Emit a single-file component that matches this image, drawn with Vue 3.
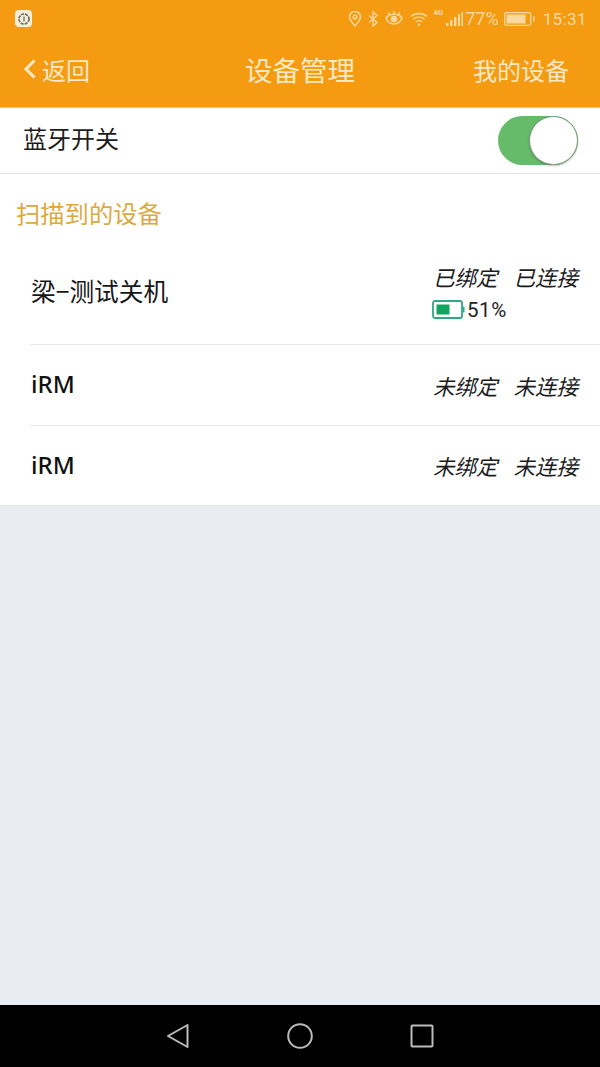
<script setup>
const devices = [
  { id: 1, name: '梁−测试关机', bind: '已绑定', link: '已连接', battery: 51 },
  { id: 2, name: 'iRM', bind: '未绑定', link: '未连接' },
  { id: 3, name: 'iRM', bind: '未绑定', link: '未连接' }
]
</script>

<template>
  <div class="page">
    <header class="top">
      <div class="status">
        <div class="app-badge">
          <svg width="16" height="16" viewBox="0 0 16 16"><circle cx="8" cy="8" r="5" fill="none" stroke="#5d6b66" stroke-width="1.6" stroke-dasharray="3 1"/><rect x="7.4" y="5.5" width="1.2" height="5" fill="#5d6b66"/></svg>
        </div>
        <div class="status-right">
          <svg class="ic" width="14" height="16" viewBox="0 0 14 16" fill="none" stroke="#f9d9a0" stroke-width="1.5"><path d="M7 15C4 11 1.5 8.8 1.5 6a5.5 5.5 0 0 1 11 0C12.500 8.800 10 11 7 15Z"/><circle cx="7" cy="6" r="1.800"/></svg>
          <svg class="ic" width="10" height="16" viewBox="0 0 10 16" fill="none" stroke="#f9d9a0" stroke-width="1.3"><path d="M1 4.500l8 7-4 3.500V1l4 3.500-8 7"/></svg>
          <svg class="ic" width="20" height="16" viewBox="0 0 20 16" fill="none" stroke="#f9d9a0" stroke-width="1.400"><path d="M2 7c2-3 4.500-3.800 8-3.800S16 4 18 7c-1.500 4-4.500 6-8 6s-6.500-2-8-6Z"/><circle cx="10" cy="8" r="2.600" fill="#f9d9a0"/><path d="M4 1.500l2 2.500M16 1.500l-2 2.500M10 0v2.500"/></svg>
          <svg class="ic" width="18" height="16" viewBox="0 0 18 16" fill="none" stroke="#f9d9a0" stroke-width="1.300"><path d="M1 5.500c4.500-4 11.500-4 16 0M3.500 8.200c3-2.700 8-2.700 11 0M6 11c1.700-1.500 4.300-1.500 6 0"/><circle cx="9" cy="13.800" r="1.200" fill="#f9d9a0" stroke="none"/></svg>
          <div class="signal">
            <span class="four-g">4G</span>
            <svg width="18" height="16" viewBox="0 0 18 16" fill="#f9d9a0"><rect x="0" y="12" width="2.400" height="3"/><rect x="4" y="9" width="2.400" height="6"/><rect x="8" y="6" width="2.400" height="9"/><rect x="12" y="3" width="2" height="12"/><rect x="15.500" y="1" width="1.500" height="14"/></svg>
          </div>
          <span class="pct">77%</span>
          <svg class="batt" width="32" height="14" viewBox="0 0 32 14"><rect x="0.700" y="0.700" width="26" height="12.600" rx="1.500" fill="none" stroke="#f9d9a0" stroke-width="1.300"/><rect x="2.500" y="2.500" width="19" height="9" fill="#f9d9a0"/><rect x="29" y="4.500" width="1.500" height="5" fill="#f9d9a0"/></svg>
          <span class="clock">15:31</span>
        </div>
      </div>
      <nav class="nav">
        <div class="back">
          <svg width="14" height="22" viewBox="0 0 14 22" fill="none" stroke="#fbe8c4" stroke-width="3"><path d="M11.500 2.500L3 11l8.500 8.500"/></svg>
          <span>返回</span>
        </div>
        <div class="title">设备管理</div>
        <div class="mine">我的设备</div>
      </nav>
    </header>

    <section class="switch-row">
      <span class="switch-label">蓝牙开关</span>
      <div class="toggle"><div class="knob"></div></div>
    </section>

    <h2 class="section"><span>扫描到的设备</span></h2>

    <ul class="list">
      <li v-for="d in devices" :key="d.id" class="item" :class="{ tall: d.battery }">
        <span class="name" :class="{ latin: !d.battery }">{{ d.name }}</span>
        <div class="state">
          <div class="labels"><em>{{ d.bind }}</em><em>{{ d.link }}</em></div>
          <div v-if="d.battery" class="level">
            <svg width="34" height="19" viewBox="0 0 34 19"><rect x="1" y="1" width="29" height="17" rx="2" fill="none" stroke="#2fa97f" stroke-width="1.800"/><rect x="4.500" y="4.500" width="13" height="10" fill="#12a560"/><rect x="31" y="6.500" width="1.500" height="6" fill="#2fa97f"/></svg>
            <span>{{ d.battery }}%</span>
          </div>
        </div>
      </li>
    </ul>

    <div class="fill"></div>

    <footer class="sysbar">
      <svg width="24" height="26" viewBox="0 0 24 26" fill="none" stroke="#bcbcbc" stroke-width="2" stroke-linejoin="round"><path d="M21.500 2v22L2 13Z"/></svg>
      <svg width="26" height="26" viewBox="0 0 26 26" fill="none" stroke="#bcbcbc" stroke-width="2"><circle cx="13" cy="13" r="11.800"/></svg>
      <svg width="24" height="24" viewBox="0 0 24 24" fill="none" stroke="#bcbcbc" stroke-width="2" stroke-linejoin="round"><rect x="1.500" y="1.500" width="21" height="21" rx="1"/></svg>
    </footer>
  </div>
</template>

<style scoped>
.page {
  width: 600px;
  height: 1067px;
  display: flex;
  flex-direction: column;
  background: #e9edf2;
  font-family: "Noto Sans CJK SC", "Noto Sans", sans-serif;
  overflow: hidden;
}
.top {
  height: 107px;
  flex: none;
  background: #f49b11;
  box-shadow: 0 1px 1px rgba(160, 120, 40, 0.35);
  position: relative;
  z-index: 1;
}
.status {
  height: 37px;
  display: flex;
  align-items: center;
  justify-content: space-between;
  padding: 0 13px 0 15px;
}
.app-badge {
  width: 17px;
  height: 17px;
  border-radius: 4px;
  background: #f8eed8;
  display: flex;
  align-items: center;
  justify-content: center;
}
.status-right {
  display: flex;
  align-items: center;
  color: #f9d9a0;
  font-family: Roboto, "Noto Sans", sans-serif;
}
.ic { margin-right: 6px; }
.signal { position: relative; margin-left: 12px; height: 16px; }
.four-g {
  position: absolute;
  left: -13px;
  top: -3px;
  font-size: 8px;
  font-weight: 700;
}
.pct { font-size: 18px; margin-left: 1px; }
.batt { margin: 0 7px 0 5px; }
.clock { font-size: 17px; letter-spacing: 0.4px; }
.nav {
  height: 70px;
  display: grid;
  grid-template-columns: 1fr auto 1fr;
  align-items: center;
  padding: 0 31px 0 23px;
  color: #fbe8c4;
  margin-top: -3px;
}
.back { display: flex; align-items: center; gap: 5px; font-size: 24px; }
.title { font-size: 27.500px; transform: translateX(4px); }
.mine { font-size: 24px; text-align: right; }
.switch-row {
  height: 67px;
  flex: none;
  box-sizing: border-box;
  background: #fff;
  border-bottom: 1px solid #e6e6e6;
  display: flex;
  align-items: center;
  justify-content: space-between;
  padding: 0 22px 0 23px;
  font-size: 24px;
  color: #1c1c1c;
}
.switch-label { margin-top: -5px; }
.toggle {
  width: 80px;
  height: 49px;
  border-radius: 25px;
  background: #66bb6a;
  position: relative;
}
.knob {
  position: absolute;
  right: 0;
  top: 0;
  width: 49px;
  height: 49px;
  box-sizing: border-box;
  border-radius: 50%;
  background: #fff;
  border: 1.500px solid #7d9b80;
  box-shadow: 0 1px 2px rgba(0, 0, 0, 0.25);
}
.section {
  margin: 0;
  height: 68px;
  flex: none;
  box-sizing: border-box;
  background: #fff;
  padding: 8px 0 0 16px;
  display: flex;
  align-items: center;
  font-size: 24.300px;
  font-weight: 400;
  color: #dca93f;
}
.list {
  list-style: none;
  margin: 0;
  padding: 0;
  background: #fff;
  border-bottom: 1px solid #e3e6ea;
  flex: none;
}
.item {
  height: 81px;
  box-sizing: border-box;
  margin-left: 30px;
  padding: 0 22px 0 1px;
  border-bottom: 1px solid #e8e8e8;
  display: flex;
  align-items: center;
  justify-content: space-between;
}
.item:last-child { border-bottom: 0; height: 79px; }
.item.tall { height: 103px; }
.name { font-size: 24.700px; color: #161616; margin-top: -6px; }
.name.latin { font-size: 24px; font-family: "Noto Sans", sans-serif; font-weight: 500; color: #111; margin-top: -3px; }
.state { display: flex; flex-direction: column; align-items: flex-start; }
.labels { display: flex; gap: 16px; font-size: 21.500px; color: #1c1c1c; }
.labels em { font-style: italic; }
.level { display: flex; align-items: center; font-size: 20.500px; letter-spacing: 0.6px; color: #222; height: 32px; font-family: Roboto, sans-serif; margin-left: -1px; margin-top: 2px; }
.level svg { margin-right: 1px; }
.fill { flex: 1; }
.sysbar {
  height: 62px;
  flex: none;
  background: #000;
  display: flex;
  align-items: center;
  justify-content: space-between;
  padding: 0 166px;
}
</style>
